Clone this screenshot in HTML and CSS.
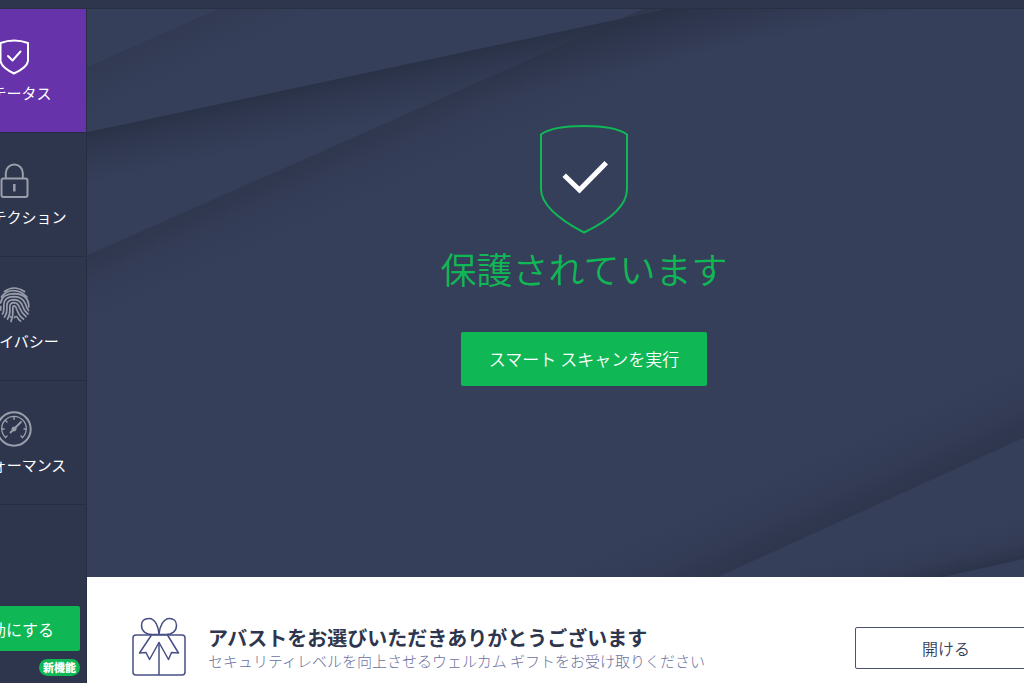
FILE: index.html
```html
<!DOCTYPE html>
<html lang="ja">
<head>
<meta charset="utf-8">
<meta name="viewport" content="width=device-width, initial-scale=1">
<title>ステータス</title>
<link rel="stylesheet" href="styles.css">
</head>
<body>
<div class="app">
  <header class="titlebar"></header>
  <aside class="sidebar">
    <nav class="nav">
      <a class="nav-item nav-item-active" href="#status">
        <svg class="nav-icon" viewBox="0 0 36 36" fill="none" stroke="currentColor" stroke-width="2" stroke-linejoin="round" stroke-linecap="round"><path d="M4.500 4Q18-1 32 4V22Q31 28.500 18 34.500Q5.500 28.500 4.500 22Z"/><path d="M12 17l4.500 4.500 8-9"/></svg>
        <span>ステータス</span>
      </a>
      <a class="nav-item" href="#protection">
        <svg class="nav-icon" viewBox="0 0 36 36" fill="none" stroke="currentColor" stroke-width="2"><rect x="5.500" y="15.500" width="26" height="18.500" rx="2"/><path d="M9.800 15.500V10a8.500 8.500 0 0 1 17 0V15.500"/><path d="M18.300 21v7.500" stroke-width="2.500"/></svg>
        <span>プロテクション</span>
      </a>
      <a class="nav-item" href="#privacy">
        <svg class="nav-icon" viewBox="0 0 36 36" fill="none" stroke="currentColor" stroke-width="1.700" stroke-linecap="round"><path d="M8.500 4.500Q18-2.500 28.500 4.500"/><path d="M5.500 10Q10 3.500 18 3.700Q25 3.700 31 10"/><path d="M4.700 16Q5.500 7 18 6.700Q31 7 32.700 17V20"/><path d="M4.700 19.500V23"/><path d="M6.500 27Q8.200 25 7.800 18Q8 9.700 18 9.700Q27 10 29.500 17Q30.500 21 32.500 23.500"/><path d="M8.500 30Q11.500 26 10.800 19Q11 12.700 18 12.700Q24.500 13 26.500 19Q28 24 32 27"/><path d="M11.500 32Q14.500 27 13.800 20Q14 15.700 18 15.700Q22 16 23.500 20.500Q25.500 26 30 29.500"/><path d="M15 34.500Q17.500 28 16.800 20.500Q17 18.700 18.500 18.900Q20 19.500 21 23Q23 29 27.500 32"/><path d="M14.500 29.500V30M18.500 30.500Q20 28.500 21.500 30.500Q22.500 33 24.500 34"/></svg>
        <span>プライバシー</span>
      </a>
      <a class="nav-item" href="#performance">
        <svg class="nav-icon" viewBox="0 0 36 36" fill="none" stroke="currentColor" stroke-linecap="round"><circle cx="18" cy="18" r="16.700" stroke-width="2"/><path d="M9.500 26.500A12.300 12.300 0 1 1 26.500 26.500" stroke-width="1.300"/><path d="M9.500 26.500l1.500-1.500M26.500 26.500L25 25M6 18h2.200M28 18h2.200M18 6v2.200M9.500 9.500l1.500 1.500" stroke-width="1.500"/><path d="M14.500 21.500L25 11" stroke-width="1.800"/><circle cx="18" cy="18" r="2" fill="currentColor"/></svg>
        <span>パフォーマンス</span>
      </a>
    </nav>
    <div class="activation">
      <button class="activate" type="button">有効にする</button>
      <span class="badge">新機能</span>
    </div>
  </aside>
  <main class="stage">
    <svg class="stage-art" viewBox="0 0 937 567" preserveAspectRatio="none" aria-hidden="true">
      <defs>
        <linearGradient id="fold-a" gradientUnits="userSpaceOnUse" x1="65" y1="29" x2="84" y2="71"><stop offset="0" stop-color="#2b3246" stop-opacity=".35"/><stop offset="1" stop-color="#2b3246" stop-opacity="0"/></linearGradient>
        <linearGradient id="fold-b" gradientUnits="userSpaceOnUse" x1="290" y1="61" x2="301" y2="113"><stop offset="0" stop-color="#283044" stop-opacity=".9"/><stop offset=".4" stop-color="#2a3249" stop-opacity=".5"/><stop offset="1" stop-color="#2b3246" stop-opacity="0"/></linearGradient>
        <linearGradient id="fold-c" gradientUnits="userSpaceOnUse" x1="269" y1="127" x2="295" y2="186"><stop offset="0" stop-color="#2b3246" stop-opacity=".6"/><stop offset=".4" stop-color="#2b3249" stop-opacity=".25"/><stop offset="1" stop-color="#2b3246" stop-opacity="0"/></linearGradient>
        <linearGradient id="fold-d" gradientUnits="userSpaceOnUse" x1="784" y1="497" x2="755" y2="433"><stop offset="0" stop-color="#2b3248" stop-opacity=".7"/><stop offset=".4" stop-color="#2b3249" stop-opacity=".3"/><stop offset="1" stop-color="#2b3246" stop-opacity="0"/></linearGradient>
        <linearGradient id="fold-e" gradientUnits="userSpaceOnUse" x1="898" y1="558" x2="889" y2="518"><stop offset="0" stop-color="#283044" stop-opacity=".8"/><stop offset=".4" stop-color="#2b3249" stop-opacity=".3"/><stop offset="1" stop-color="#2b3246" stop-opacity="0"/></linearGradient>
      </defs>
      <path fill="url(#fold-a)" d="M0 58L131 0H580L0 123Z"/>
      <path fill="url(#fold-b)" d="M0 123L580 0H937V567H0Z"/>
      <path fill="url(#fold-c)" d="M0 246L556 0H937V567H0Z"/>
      <path fill="url(#fold-d)" d="M631 567L937 428V0H0V567Z"/>
      <path fill="url(#fold-e)" d="M631 567L937 428V549L856 567Z"/>
    </svg>
    <section class="status">
      <svg class="status-icon" viewBox="0 0 90 110" fill="none"><path d="M2 10.500Q13 2 45 2T88 10.500V65Q88 88 45 108.500Q2 86 2 65Z" stroke="#10b755" stroke-width="2" stroke-linejoin="round"/><path d="M27 53L40.500 66 65.500 40.500" stroke="#fff" stroke-width="5" stroke-linecap="square"/></svg>
      <h1 class="status-title">保護されています</h1>
      <button class="scan" type="button">スマート スキャンを実行</button>
    </section>
  </main>
  <footer class="offer">
    <svg class="offer-icon" viewBox="0 0 54 60" fill="none" stroke="#484f84" stroke-width="1.500" stroke-linejoin="round"><rect x="1" y="18" width="52" height="40" rx="3"/><path d="M27 58V25.500"/><path d="M27 17.500C27.500 10 31 1.500 37.500 1.500C42 1.500 44.500 4.500 44.500 8.500C44.500 14 40 17.500 34 17.500H20C14 17.500 9.500 14 9.500 8.500C9.500 4.500 12 1.500 17 1.500C23.500 1.500 26.500 10 27 17.500Z"/><path d="M19.500 18L7.500 36 14 35.500 17.500 42.500 27 25.500 36.500 42.500 39.500 35.500 46.500 36 35.500 18"/></svg>
    <div class="offer-text">
      <h2 class="offer-title">アバストをお選びいただきありがとうございます</h2>
      <p class="offer-detail">セキュリティレベルを向上させるウェルカム ギフトをお受け取りください</p>
    </div>
    <button class="open" type="button">開ける</button>
  </footer>
</div>
</body>
</html>
```
FILE: styles.css
```css
* {
  box-sizing: border-box;
}

body {
  margin: 0;
  font-family: "Noto Sans CJK JP", sans-serif;
  background: #2e364e;
}

button {
  font-family: inherit;
  padding: 0;
  border: 0;
  cursor: pointer;
  white-space: nowrap;
}

.app {
  display: grid;
  grid-template-columns: 87px minmax(0, 1fr);
  grid-template-rows: 9px minmax(0, 1fr) auto;
  min-height: 100vh;
  overflow: hidden;
}

.titlebar {
  grid-column: 1 / -1;
  background: #2e364e;
  border-bottom: 1px solid #293044;
}

.sidebar {
  grid-row: 2 / 4;
  display: flex;
  flex-direction: column;
  justify-content: space-between;
  overflow: hidden;
  background: #2e364e;
  border-right: 1px solid #272e42;
}

/* The rail is wider than its column and runs off the left edge. */
.nav,
.activation {
  width: 144px;
  margin-left: -58px;
}

.nav-item {
  display: flex;
  flex-direction: column;
  align-items: center;
  gap: 6px;
  height: 124px;
  padding-top: 30px;
  border-bottom: 1px solid #272e42;
  color: #9a9eaa;
  font-size: 15px;
  line-height: 24px;
  text-decoration: none;
  white-space: nowrap;
}

.nav-item span {
  color: #fff;
}

.nav-item-active {
  background: #6633aa;
  color: #fff;
}

.nav-icon {
  width: 36px;
  height: 36px;
}

.activation {
  display: flex;
  flex-direction: column;
  align-items: flex-end;
  gap: 8px;
  padding: 0 6px 7px 0;
}

.activate {
  width: 132px;
  height: 45px;
  border-radius: 2px;
  background: #10b755;
  color: #fff;
  font-size: 16px;
}

.badge {
  padding: 0 4px;
  border-radius: 9px;
  background: #10b755;
  color: #fff;
  font-size: 11px;
  font-weight: 900;
  line-height: 17px;
}

.stage {
  position: relative;
  background: #363f5a;
}

.stage-art {
  position: absolute;
  inset: 0;
  width: 100%;
  height: 100%;
}

.status {
  position: relative;
  display: flex;
  flex-direction: column;
  align-items: center;
  padding: 115px 0 0 57px;
}

.status-icon {
  width: 90px;
  height: 110px;
}

.status-title {
  margin: 7px 0 37px;
  color: #10b755;
  font-size: 36px;
  font-weight: 350;
  line-height: 54px;
}

.scan {
  width: 246px;
  height: 54px;
  padding-bottom: 2px;
  border-radius: 2px;
  background: #10b755;
  color: #fff;
  font-size: 17px;
  font-weight: 350;
}

.offer {
  display: flex;
  align-items: center;
  padding: 40px 0 4px 45px;
  background: #fff;
}

.offer-icon {
  flex: none;
  align-self: flex-start;
  width: 54px;
  height: 60px;
}

.offer-text {
  flex: 1;
  min-width: 0;
  padding: 8px 0;
  margin-left: 22px;
}

.offer-title {
  margin: 0;
  color: #2e364e;
  font-size: 20px;
  font-weight: 700;
  line-height: 26px;
  white-space: nowrap;
}

.offer-detail {
  margin: 0;
  color: #6b70a0;
  font-size: 15px;
  font-weight: 300;
  line-height: 20px;
  white-space: nowrap;
}

.open {
  flex: none;
  width: 182px;
  height: 42px;
  margin-right: -13px;
  border: 1px solid #4a526c;
  border-radius: 2px;
  background: #fff;
  color: #363f5a;
  font-size: 16px;
  font-weight: 350;
}
```
